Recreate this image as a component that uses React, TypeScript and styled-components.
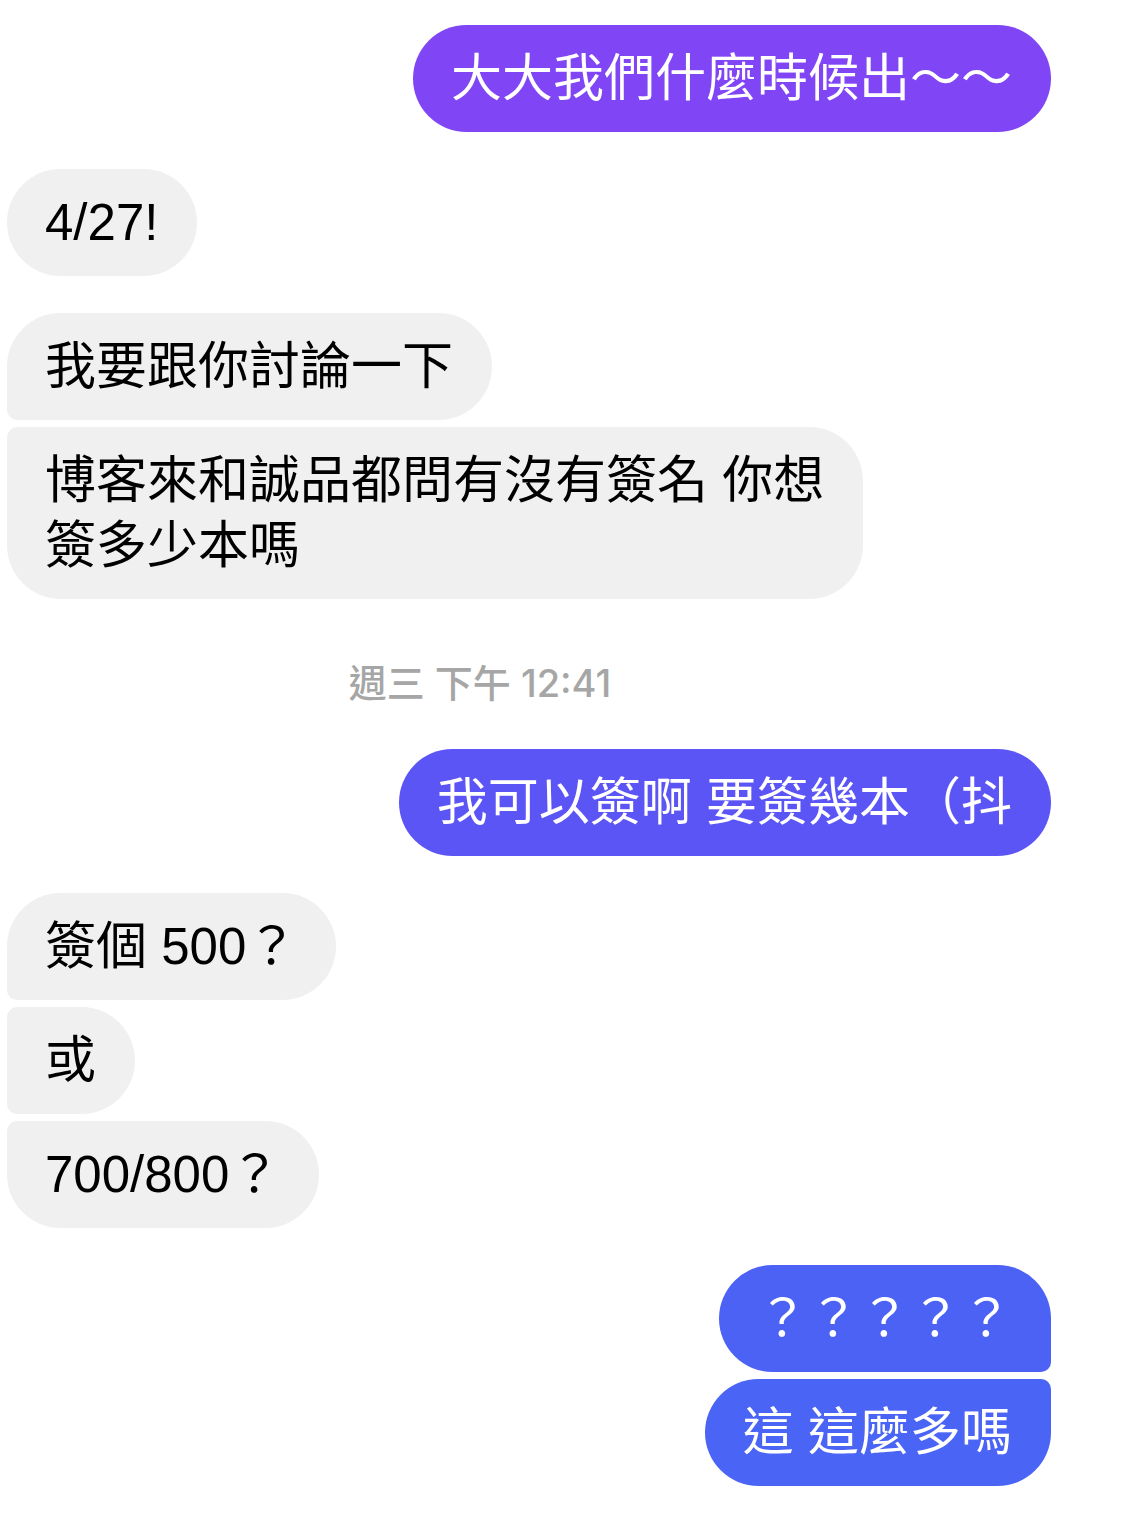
import { Component, ReactNode } from "react";
import styled, { createGlobalStyle } from "styled-components";

const GlobalStyle = createGlobalStyle`
  html, body {
    margin: 0;
    padding: 0;
    background: #ffffff;
  }
  body {
    font-family: "Liberation Sans", "Noto Sans CJK TC", "Noto Sans", sans-serif;
    -webkit-font-smoothing: antialiased;
  }
`;

export const Thread = styled.div`
  width: 1123px;
  box-sizing: border-box;
  padding: 25px 72px 26px 7px;
  display: flex;
  flex-direction: column;
  gap: 37px;
`;

interface GroupProps {
  $mine?: boolean;
}

export const Group = styled.div<GroupProps>`
  display: flex;
  flex-direction: column;
  align-items: ${(p) => (p.$mine ? "flex-end" : "flex-start")};
  gap: 7px;
`;

// position in a run of bubbles from the same sender
type Pos = "single" | "first" | "middle" | "last";

interface BubbleProps {
  $mine?: boolean;
  $pos: Pos;
  $bg?: string;
}

const BIG = "54px";
const SMALL = "10px";

function corners(mine: boolean | undefined, pos: Pos): string {
  const top = pos === "single" || pos === "first" ? BIG : SMALL;
  const bottom = pos === "single" || pos === "last" ? BIG : SMALL;
  // top-left top-right bottom-right bottom-left
  return mine
    ? `${BIG} ${top} ${bottom} ${BIG}`
    : `${top} ${BIG} ${BIG} ${bottom}`;
}

export const Bubble = styled.div<BubbleProps>`
  box-sizing: border-box;
  max-width: 870px;
  min-height: 107px;
  padding: 21px 39px 21px 38px;
  font-size: 51px;
  line-height: 65px;
  font-weight: 400;
  color: ${(p) => (p.$mine ? "#ffffff" : "#000000")};
  background: ${(p) => p.$bg ?? "#f0f0f0"};
  border-radius: ${(p) => corners(p.$mine, p.$pos)};
  white-space: pre-wrap;
`;

// sits between groups: cancels the thread gap and sets its own band height
export const Stamp = styled.div`
  box-sizing: border-box;
  height: 150px;
  margin: -37px 0;
  padding: 59px 98px 0 0;
  text-align: center;
  font-family: "Inter", "Noto Sans CJK TC", sans-serif;
  font-size: 38px;
  line-height: 50px;
  font-weight: 500;
  color: #a6a6a6;
`;

export default class App extends Component {
  render(): ReactNode {
    return (
      <>
        <GlobalStyle />
        <Thread>
          <Group $mine>
            <Bubble $mine $pos="single" $bg="#8045f5">
              大大我們什麼時候出～～
            </Bubble>
          </Group>
          <Group>
            <Bubble $pos="single">4/27!</Bubble>
          </Group>
          <Group>
            <Bubble $pos="first">我要跟你討論一下</Bubble>
            <Bubble $pos="last">{"博客來和誠品都問有沒有簽名 你想\n簽多少本嗎"}</Bubble>
          </Group>
          <Stamp>週三 下午 12:41</Stamp>
          <Group $mine>
            <Bubble $mine $pos="single" $bg="#5c55f5">
              我可以簽啊 要簽幾本（抖
            </Bubble>
          </Group>
          <Group>
            <Bubble $pos="first">簽個 500？</Bubble>
            <Bubble $pos="middle">或</Bubble>
            <Bubble $pos="last">700/800？</Bubble>
          </Group>
          <Group $mine>
            <Bubble $mine $pos="first" $bg="#4b62f5">
              ？？？？？
            </Bubble>
            <Bubble $mine $pos="last" $bg="#4a64f5">
              這 這麼多嗎
            </Bubble>
          </Group>
        </Thread>
      </>
    );
  }
}
